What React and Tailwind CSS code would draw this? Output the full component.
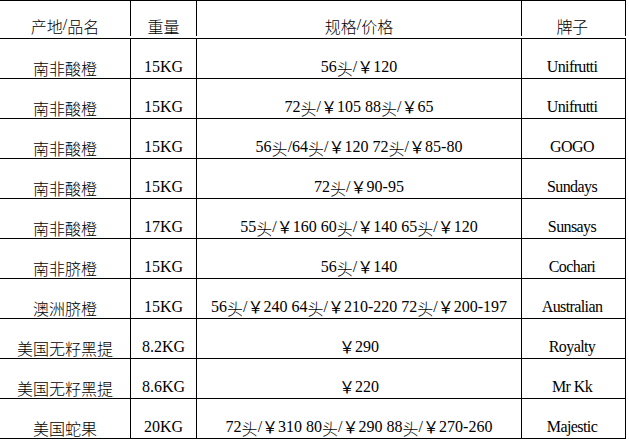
import React from "react";

const rows = [
  ["南非酸橙", "15KG", "56头/￥120", "Unifrutti"],
  ["南非酸橙", "15KG", "72头/￥105 88头/￥65", "Unifrutti"],
  ["南非酸橙", "15KG", "56头/64头/￥120 72头/￥85-80", "GOGO"],
  ["南非酸橙", "15KG", "72头/￥90-95", "Sundays"],
  ["南非酸橙", "17KG", "55头/￥160 60头/￥140 65头/￥120", "Sunsays"],
  ["南非脐橙", "15KG", "56头/￥140", "Cochari"],
  ["澳洲脐橙", "15KG", "56头/￥240 64头/￥210-220 72头/￥200-197", "Australian"],
  ["美国无籽黑提", "8.2KG", "￥290", "Royalty"],
  ["美国无籽黑提", "8.6KG", "￥220", "Mr Kk"],
  ["美国蛇果", "20KG", "72头/￥310 80头/￥290 88头/￥270-260", "Majestic"],
];

function Mixed({ text }) {
  const parts = text.split(/([\u3000-\u9fff]+|￥)/).filter(Boolean);
  return (
    <>
      {parts.map((p, i) =>
        p === "￥" ? (
          <span key={i} className="inline-block translate-y-[1px]">
            {p}
          </span>
        ) : /[\u3000-\u9fff]/.test(p) ? (
          <span key={i} className="inline-block translate-y-[3px] font-light">
            {p}
          </span>
        ) : (
          <span key={i}>{p}</span>
        )
      )}
    </>
  );
}

function Row({ cells, header }) {
  const h = header ? "h-[38px] pb-[2px]" : "h-[40px]";
  return (
    <div className={`flex ${h} border-b border-black`}>
      <div className="w-[131px] border-r border-black flex items-end justify-center pb-[3px] whitespace-nowrap">
        <Mixed text={cells[0]} />
      </div>
      <div className="w-[66px] border-r border-black flex items-end justify-center pb-[3px] whitespace-nowrap">
        <Mixed text={cells[1]} />
      </div>
      <div className="w-[325px] border-r border-black flex items-end justify-center pb-[3px] whitespace-nowrap">
        <Mixed text={cells[2]} />
      </div>
      <div className="w-[104px] border-r border-black flex items-end justify-center pb-[3px] pr-[3px] whitespace-nowrap tracking-[-0.6px]">
        <Mixed text={cells[3]} />
      </div>
    </div>
  );
}

export default function App() {
  return (
    <div className="w-[629px] h-[441px] bg-white overflow-hidden">
      <div
        className="w-[626px] border-t border-black text-black text-[16px] leading-none"
        style={{ fontFamily: '"Liberation Serif", "Noto Sans CJK SC", serif' }}
      >
        <Row header cells={["产地/品名", "重量", "规格/价格", "牌子"]} />
        {rows.map((r, i) => (
          <Row key={i} cells={r} />
        ))}
      </div>
    </div>
  );
}
